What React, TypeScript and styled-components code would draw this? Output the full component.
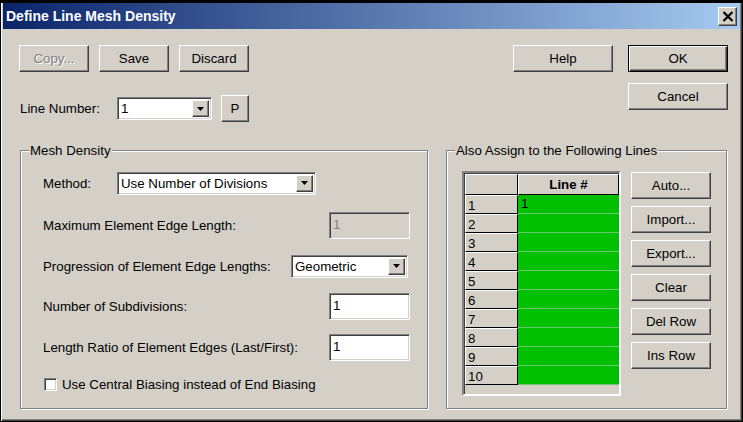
import React from 'react';
import styled, { createGlobalStyle, css } from 'styled-components';

const face = '#d4d0c8';
const shadow = '#808080';
const darkShadow = '#404040';

const GlobalStyle = createGlobalStyle`
	html, body {
		margin: 0;
		padding: 0;
		background: #000;
	}
	body {
		font-family: 'Liberation Sans', Arial, sans-serif;
		font-size: 13.3px;
		color: #000;
	}
`;

const Window = styled.div`
	width: 743px;
	height: 422px;
	box-sizing: border-box;
	background: ${face};
	border-style: solid;
	border-width: 3px 1px 1px 1px;
	border-color: #000;
	padding: 0 2px 2px 2px;
	box-shadow: inset 1px 0 #fff, inset -1px -1px ${darkShadow}, inset -2px -2px ${shadow};
	display: flex;
	flex-direction: column;
`;

const TitleBar = styled.div`
	height: 26px;
	display: flex;
	align-items: center;
	justify-content: space-between;
	padding: 0 3px 0 3px;
	background: linear-gradient(to right, #0a246a, #a6caf0);
`;

const TitleText = styled.span`
	color: #fff;
	font-weight: bold;
	font-size: 14px;
`;

const CloseButton = styled.div`
	width: 19px;
	height: 19px;
	box-sizing: border-box;
	background: ${face};
	display: flex;
	align-items: center;
	justify-content: center;
	border: 1px solid;
	border-color: #fff ${darkShadow} ${darkShadow} #fff;
	box-shadow: inset -1px -1px ${shadow};
	margin-top: 1px;
`;

const Body = styled.div`
	flex: 1;
	display: flex;
	flex-direction: column;
	padding: 16px 12px 10px 16px;
`;

const TopSection = styled.div`
	display: flex;
	justify-content: space-between;
	align-items: flex-start;
`;

const LeftTop = styled.div`
	display: flex;
	flex-direction: column;
`;

const ButtonRow = styled.div`
	display: flex;
	gap: 10px;
`;

const RightButtons = styled.div`
	display: grid;
	grid-template-columns: 100px 100px;
	column-gap: 15px;
	row-gap: 11px;
`;

const raised = css`
	border: 1px solid;
	border-color: #fff ${darkShadow} ${darkShadow} #fff;
	box-shadow: inset -1px -1px ${shadow};
`;

const Button = styled.button<{ $w: number; $h?: number; $default?: boolean; $ml?: number }>`
	width: ${(p) => p.$w}px;
	height: ${(p) => p.$h ?? 27}px;
	box-sizing: border-box;
	padding: 0;
	margin: 0 0 0 ${(p) => p.$ml ?? 0}px;
	font-family: 'Liberation Sans', Arial, sans-serif;
	font-size: 13.3px;
	color: #000;
	background: ${face};
	${(p) =>
		p.$default
			? css`
					border: 1px solid #000;
					box-shadow: inset 1px 1px #fff, inset -1px -1px ${darkShadow}, inset -2px -2px ${shadow};
			  `
			: raised}
	&:disabled {
		color: ${shadow};
		text-shadow: 1px 1px #fff;
	}
`;

const FieldRow = styled.div`
	display: flex;
	align-items: center;
	margin-top: 23px;
	padding-left: 1px;
`;

const Label = styled.span<{ $w?: number }>`
	display: inline-block;
	width: ${(p) => (p.$w ? `${p.$w}px` : 'auto')};
	white-space: nowrap;
`;

const sunken = css`
	box-sizing: border-box;
	border: 1px solid;
	border-color: ${shadow} #fff #fff ${shadow};
	box-shadow: inset 1px 1px ${darkShadow}, inset -1px -1px ${face};
`;

const Combo = styled.div<{ $w: number; $mr?: number }>`
	${sunken};
	width: ${(p) => p.$w}px;
	height: 23px;
	background: #fff;
	display: flex;
	align-items: center;
	padding: 2px;
	margin-right: ${(p) => p.$mr ?? 0}px;
`;

const ComboValue = styled.span`
	flex: 1;
	padding-left: 1px;
	white-space: nowrap;
`;

const ComboArrow = styled.div`
	width: 17px;
	height: 100%;
	box-sizing: border-box;
	background: ${face};
	${raised};
	display: flex;
	align-items: center;
	justify-content: center;
`;

const TextField = styled.div<{ $disabled?: boolean }>`
	${sunken};
	width: 81px;
	height: 27px;
	padding: 4px 0 0 3px;
	background: ${(p) => (p.$disabled ? face : '#fff')};
	color: ${(p) => (p.$disabled ? shadow : '#000')};
	line-height: 15px;
`;

const GroupRow = styled.div`
	display: flex;
	gap: 18px;
	margin-top: 28px;
	margin-left: 1px;
	flex: 1;
`;

const GroupBox = styled.div<{ $w: number }>`
	position: relative;
	width: ${(p) => p.$w}px;
	box-sizing: border-box;
	border: 1px solid ${shadow};
	box-shadow: inset 1px 1px #fff, 1px 1px #fff;
`;

const Legend = styled.span`
	position: absolute;
	top: -8px;
	left: 8px;
	padding: 0 1px;
	background: ${face};
	line-height: 15px;
`;

const MeshContent = styled.div`
	display: flex;
	flex-direction: column;
	padding: 11px 17px 0 22px;
`;

const FormRow = styled.div<{ $h: number }>`
	height: ${(p) => p.$h}px;
	display: flex;
	align-items: center;
	justify-content: space-between;
`;

const LeftGroup = styled.div`
	display: flex;
	align-items: center;
`;

const CheckRow = styled.div`
	display: flex;
	align-items: center;
	gap: 5px;
	padding-left: 1px;
	height: 35px;
`;

const CheckBox = styled.div`
	${sunken};
	width: 13px;
	height: 13px;
	background: #fff;
`;

const AssignContent = styled.div`
	display: flex;
	gap: 10px;
	padding: 20px 0 0 15px;
`;

const GridFrame = styled.div`
	width: 159px;
	height: 225px;
	box-sizing: border-box;
	border: 2px solid;
	border-color: ${shadow} #fff #fff ${shadow};
	box-shadow: inset 1px 1px ${darkShadow};
	padding: 1px 0 0 1px;
`;

const Table = styled.div`
	display: grid;
	grid-template-columns: 53px 101px;
	grid-template-rows: 21px repeat(10, 19px);
`;

const HeadCell = styled.div<{ $bold?: boolean }>`
	box-sizing: border-box;
	background: ${face};
	border-style: solid;
	border-width: 1px;
	border-color: #fff #000 #000 #fff;
	display: flex;
	align-items: center;
	justify-content: ${(p) => (p.$bold ? 'center' : 'flex-start')};
	font-weight: ${(p) => (p.$bold ? 'bold' : 'normal')};
	padding: ${(p) => (p.$bold ? '0' : '2px 0 0 2px')};
	line-height: 15px;
`;

const DataCell = styled.div`
	box-sizing: border-box;
	background: #00c000;
	border-bottom: 1px solid #6cc46c;
	padding: 1px 0 0 3px;
	line-height: 15px;
`;

const SideButtons = styled.div`
	display: flex;
	flex-direction: column;
	gap: 7px;
	padding-top: 1px;
`;

const DownArrow = () => (
	<svg width="7" height="4" viewBox="0 0 7 4">
		<polygon points="0,0 7,0 3.5,4" fill="#000" />
	</svg>
);

const ComboBox: React.FC<{ value: string; width: number; mr?: number }> = ({ value, width, mr }) => (
	<Combo $w={width} $mr={mr}>
		<ComboValue>{value}</ComboValue>
		<ComboArrow>
			<DownArrow />
		</ComboArrow>
	</Combo>
);

const rows = [1, 2, 3, 4, 5, 6, 7, 8, 9, 10];

export default function App() {
	return (
		<>
			<GlobalStyle />
			<Window>
				<TitleBar>
					<TitleText>Define Line Mesh Density</TitleText>
					<CloseButton>
						<svg width="12" height="11" viewBox="0 0 12 11">
							<path d="M1.5 1 L10.5 10 M10.5 1 L1.5 10" stroke="#000" strokeWidth="2.2" />
						</svg>
					</CloseButton>
				</TitleBar>
				<Body>
					<TopSection>
						<LeftTop>
							<ButtonRow>
								<Button $w={70} disabled>
									Copy...
								</Button>
								<Button $w={70}>Save</Button>
								<Button $w={70}>Discard</Button>
							</ButtonRow>
							<FieldRow>
								<Label $w={97}>Line Number:</Label>
								<ComboBox value="1" width={95} />
								<Button $w={28} $ml={9}>
									P
								</Button>
							</FieldRow>
						</LeftTop>
						<RightButtons>
							<Button $w={100}>Help</Button>
							<Button $w={100} $default>
								OK
							</Button>
							<span />
							<Button $w={100}>Cancel</Button>
						</RightButtons>
					</TopSection>
					<GroupRow>
						<GroupBox $w={408}>
							<Legend>Mesh Density</Legend>
							<MeshContent>
								<FormRow $h={42}>
									<LeftGroup>
										<Label $w={74}>Method:</Label>
										<ComboBox value="Use Number of Divisions" width={199} />
									</LeftGroup>
								</FormRow>
								<FormRow $h={42}>
									<Label>Maximum Element Edge Length:</Label>
									<TextField $disabled>1</TextField>
								</FormRow>
								<FormRow $h={40}>
									<Label>Progression of Element Edge Lengths:</Label>
									<ComboBox value="Geometric" width={117} mr={2} />
								</FormRow>
								<FormRow $h={41}>
									<Label>Number of Subdivisions:</Label>
									<TextField>1</TextField>
								</FormRow>
								<FormRow $h={40}>
									<Label>Length Ratio of Element Edges (Last/First):</Label>
									<TextField>1</TextField>
								</FormRow>
								<CheckRow>
									<CheckBox />
									<Label>Use Central Biasing instead of End Biasing</Label>
								</CheckRow>
							</MeshContent>
						</GroupBox>
						<GroupBox $w={281}>
							<Legend>Also Assign to the Following Lines</Legend>
							<AssignContent>
								<GridFrame>
									<Table>
										<HeadCell />
										<HeadCell $bold>Line #</HeadCell>
										{rows.map((n) => (
											<React.Fragment key={n}>
												<HeadCell>{n}</HeadCell>
												<DataCell>{n === 1 ? '1' : ''}</DataCell>
											</React.Fragment>
										))}
									</Table>
								</GridFrame>
								<SideButtons>
									<Button $w={80}>Auto...</Button>
									<Button $w={80}>Import...</Button>
									<Button $w={80}>Export...</Button>
									<Button $w={80}>Clear</Button>
									<Button $w={80}>Del Row</Button>
									<Button $w={80}>Ins Row</Button>
								</SideButtons>
							</AssignContent>
						</GroupBox>
					</GroupRow>
				</Body>
			</Window>
		</>
	);
}
